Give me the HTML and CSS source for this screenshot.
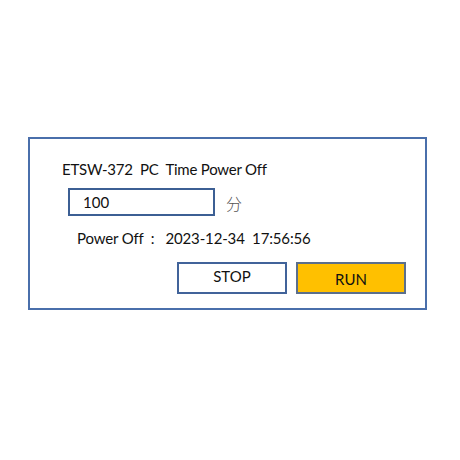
FILE: index.html
```html
<!DOCTYPE html>
<html lang="en">
<head>
    <meta charset="UTF-8">
    <meta name="viewport" content="width=device-width, initial-scale=1.0">
    <title>ETSW-372 PC Time Power Off</title>
    <link rel="stylesheet" href="styles.css">
</head>
<body>
    <div class="page">
        <div class="panel">
            <div class="title">ETSW-372  PC  Time Power Off</div>
            <div class="minutes-row">
                <input type="text" class="minutes" value="100">
                <span class="unit">分</span>
            </div>
            <div class="status">Power Off  :   2023-12-34  17:56:56</div>
            <div class="actions">
                <button class="btn stop">STOP</button>
                <button class="btn run">RUN</button>
            </div>
        </div>
    </div>
</body>
</html>
```

FILE: styles.css
```css
body { margin: 0; background-color: #fff; font-family: Lato, "Noto Sans CJK SC", sans-serif; color: #111; }
.page { width: 460px; height: 460px; padding: 137px 0 0 28px; box-sizing: border-box; }
.panel { width: 399px; height: 173px; box-sizing: border-box; border: 2px solid #4a6fab; padding: 20px 19px 0 0; display: flex; flex-direction: column; }
.title { margin-left: 32px; height: 20px; line-height: 20px; font-size: 15px; letter-spacing: -0.22px; white-space: pre; }
.minutes-row { display: flex; align-items: center; gap: 11px; margin: 9px 0 0 38px; height: 28px; }
.minutes { width: 147px; height: 28px; box-sizing: border-box; border: 2px solid #3c5f94; padding: 0 0 0 13px; font-family: Lato, sans-serif; font-size: 15px; color: #111; outline: none; }
.unit { font-family: "Noto Sans CJK SC", sans-serif; font-size: 16px; font-weight: 300; color: #555; padding-top: 2px; }
.status { margin: 12px 0 0 47px; height: 20px; line-height: 20px; font-size: 15px; letter-spacing: -0.15px; white-space: pre; }
.actions { display: flex; justify-content: flex-end; gap: 9px; margin-top: 14px; }
.btn { width: 110px; height: 32px; box-sizing: border-box; border: 2px solid #41639a; font-family: Lato, sans-serif; font-size: 15px; color: #111; cursor: pointer; }
.stop { background-color: #fff; padding-bottom: 5px; }
.run { background-color: #ffc000; border-color: #5b6f8c; padding-top: 2px; }
```
